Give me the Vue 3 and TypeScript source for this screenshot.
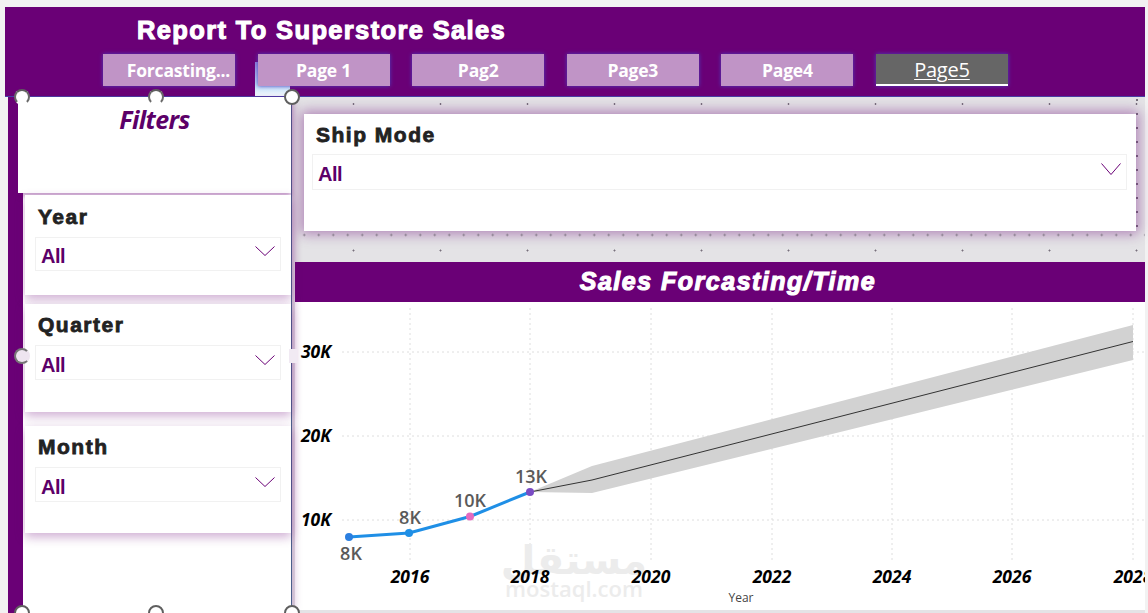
<template>
  <div class="page">
    <header class="header">
      <h1 class="title">Report To Superstore Sales</h1>
      <nav class="tabs">
        <div v-for="t in tabs" :key="t" class="tab" :class="{ active: t === 'Page5' }">{{ t }}</div>
      </nav>
    </header>

    <div class="body">
      <aside class="sidebar">
        <div class="filters">Filters</div>
        <div class="slicers">
          <section v-for="s in sideSlicers" :key="s.name" class="slicer" :class="s.cls">
            <div class="slicer-title">{{ s.name }}</div>
            <div class="dropdown">
              <span class="value">All</span>
              <svg class="chevron" width="20" height="10" viewBox="0 0 20 10">
                <path d="M0.5 0.5 L10 9.5 L19.5 0.5" fill="none" stroke="#6a0076" stroke-width="1" />
              </svg>
            </div>
          </section>
        </div>
      </aside>

      <main class="canvas">
        <div class="top-area">
          <section class="ship-card">
            <div class="slicer-title">Ship Mode</div>
            <div class="dropdown">
              <span class="value">All</span>
              <svg class="chevron" width="20" height="12" viewBox="0 0 20 12">
                <path d="M0.5 0.5 L10 11.5 L19.5 0.5" fill="none" stroke="#6a0076" stroke-width="1" />
              </svg>
            </div>
          </section>
        </div>
        <div class="dot-strip"></div>

        <div class="chart-title">Sales Forcasting/Time</div>
        <div class="chart">
          <svg width="850" height="308" viewBox="295 302 850 308">
            <g stroke="#dedede" stroke-width="1" stroke-dasharray="2 3" fill="none">
              <line v-for="y in gridY" :key="y" x1="342" x2="1145" :y1="y" :y2="y" />
              <line v-for="x in gridX" :key="x" :x1="x" :x2="x" y1="308" y2="560" />
            </g>

            <text x="574" y="574" class="wm-ar" text-anchor="middle">مستقل</text>
            <text x="574" y="597" class="wm-en" text-anchor="middle">mostaql.com</text>

            <polygon points="530,492 592,466 1133,325 1133,360 592,493" fill="#d2d2d2" />
            <polyline points="530,492 592,480 1133,341.5" fill="none" stroke="#333" stroke-width="1" />
            <polyline :points="line" fill="none" stroke="#1f8fe6" stroke-width="3" stroke-linejoin="round" />
            <circle v-for="p in points" :key="p.x" :cx="p.x" :cy="p.y" r="4" :fill="p.c" />

            <text v-for="p in points" :key="'l' + p.x" :x="p.lx" :y="p.ly" class="data-label" text-anchor="middle">{{ p.label }}</text>

            <text v-for="t in yTicks" :key="t.label" x="331" :y="t.y + 6" class="tick" text-anchor="end">{{ t.label }}</text>
            <text v-for="t in xTicks" :key="t.label" :x="t.x" y="583" class="tick" text-anchor="middle">{{ t.label }}</text>
            <text x="741" y="602" class="axis-name" text-anchor="middle">Year</text>
          </svg>
        </div>
      </main>
    </div>

    <span class="tab-glow"></span>
    <span v-for="(h, i) in handles" :key="i" class="handle" :class="h.cls" :style="{ left: h.x + 'px', top: h.y + 'px' }"></span>
  </div>
</template>

<script setup lang="ts">
const tabs = ["Forcasting...", "Page 1", "Pag2", "Page3", "Page4", "Page5"]

const sideSlicers = [
  { name: "Year", cls: "s-year" },
  { name: "Quarter", cls: "s-quarter" },
  { name: "Month", cls: "s-month" },
]

const gridY = [352, 436, 520]
const gridX = [410, 530, 651, 772, 892, 1012, 1133]

const yTicks = [
  { label: "30K", y: 352 },
  { label: "20K", y: 436 },
  { label: "10K", y: 520 },
]

const xTicks = [
  { label: "2016", x: 410 },
  { label: "2018", x: 530 },
  { label: "2020", x: 651 },
  { label: "2022", x: 772 },
  { label: "2024", x: 892 },
  { label: "2026", x: 1012 },
  { label: "2028", x: 1133 },
]

const points = [
  { x: 349, y: 537, c: "#2b7fe0", label: "8K", lx: 351, ly: 560 },
  { x: 409, y: 533, c: "#1f8fe6", label: "8K", lx: 410, ly: 524 },
  { x: 470, y: 516.5, c: "#e46ac0", label: "10K", lx: 470, ly: 507 },
  { x: 530, y: 492, c: "#7a4cc4", label: "13K", lx: 531, ly: 483 },
]

const line = points.map((p) => `${p.x},${p.y}`).join(" ")

const handles = [
  { x: 22, y: 97, cls: "open-bottom" },
  { x: 156, y: 97, cls: "open-bottom" },
  { x: 292, y: 97, cls: "" },
  { x: 22, y: 356, cls: "side" },
  { x: 292, y: 356, cls: "gap" },
  { x: 22, y: 613, cls: "" },
  { x: 156, y: 613, cls: "" },
  { x: 292, y: 613, cls: "" },
]
</script>

<style>
html,
body {
  margin: 0;
  background: #f4f4f4;
}
</style>

<style scoped>
.page {
  position: relative;
  width: 1148px;
  height: 613px;
  overflow: hidden;
  padding-top: 7px;
  box-sizing: border-box;
  background: #f2f2f2;
  font-family: "Liberation Sans", Arial, sans-serif;
}

.header {
  box-sizing: border-box;
  height: 90px;
  margin: 0 3px 0 5px;
  padding-top: 9px;
  background: #6a0076;
  border-bottom: 1px solid #4b3fa6;
}

.title {
  margin: 0 0 0 132px;
  font-size: 25.5px;
  line-height: 29px;
  font-weight: 700;
  color: #fff;
  -webkit-text-stroke: 1.1px #fff;
  letter-spacing: 1.35px;
  white-space: nowrap;
}

.tabs {
  position: relative;
  z-index: 1;
  display: flex;
  gap: 22.6px;
  margin: 9px 0 0 98px;
}

.tab {
  width: 132px;
  height: 32px;
  line-height: 33px;
  text-align: center;
  background: #c094c6;
  color: #fff;
  font-family: "Open Sans", sans-serif;
  font-size: 17.5px;
  font-weight: 700;
  letter-spacing: -0.2px;
  box-shadow: 0 0 4px #4b3fc0;
}

.tab:first-child {
  padding-left: 19px;
  box-sizing: border-box;
  white-space: nowrap;
}

.tab.active {
  box-sizing: border-box;
  background: #666;
  border-bottom: 2px solid #fff;
  font-weight: 400;
  font-size: 20px;
  line-height: 32px;
  text-decoration: underline;
  text-underline-offset: 2px;
  text-decoration-thickness: 1px;
}

.tab-glow {
  position: absolute;
  left: 255px;
  top: 62px;
  width: 35px;
  height: 34px;
  background: linear-gradient(#8f7fd8 0%, #bcdcf6 68%, #f6fbff 100%);
}

.body {
  display: flex;
  height: 516px;
  margin-right: 3px;
  padding-left: 8px;
}

.sidebar {
  position: relative;
  z-index: 1;
  box-sizing: border-box;
  width: 284px;
  flex: none;
  background: #fff;
  border-left: 15px solid #6a0076;
  border-right: 1.5px solid #4c5f8c;
  box-shadow: 5px 0 8px -3px rgba(106, 0, 118, 0.28);
}

.filters {
  box-sizing: border-box;
  height: 96px;
  margin-left: -5px;
  padding-top: 5px;
  text-align: center;
  background: #fff;
  color: #5c0068;
  font-family: "Open Sans", sans-serif;
  font-size: 25px;
  font-weight: 700;
  font-style: italic;
  letter-spacing: -0.6px;
  box-shadow: 0 3px 5px rgba(106, 0, 118, 0.4);
}

.slicers {
  display: flex;
  flex-direction: column;
  margin: 2px 0 0 2px;
}

.slicer {
  box-sizing: border-box;
  padding: 9px 10px 0;
  background: #fff;
  box-shadow: 0 4px 10px rgba(106, 0, 118, 0.32);
}

.s-year {
  height: 100px;
  margin-bottom: 9px;
}

.s-quarter {
  height: 108px;
  margin-bottom: 14px;
  padding-top: 8px;
}

.s-month {
  height: 107px;
  padding-top: 8px;
}

.slicer-title {
  padding-left: 3px;
  height: 33px;
  font-size: 21px;
  line-height: 26px;
  font-weight: 700;
  color: #222;
  -webkit-text-stroke: 0.8px #222;
  letter-spacing: 1.5px;
}

.dropdown {
  display: flex;
  align-items: center;
  justify-content: space-between;
  box-sizing: border-box;
  height: 35px;
  padding: 5px 5px 0 5px;
  border: 1px solid #f1f1f1;
  background: #fff;
}

.s-year .dropdown {
  height: 34px;
}

.value {
  font-size: 20px;
  font-weight: 700;
  color: #5c0068;
  letter-spacing: -0.5px;
}

.chevron {
  margin-top: -11px;
}

.canvas {
  flex: 1;
  min-width: 0;
  background: #e4e3e6;
}

.top-area {
  box-sizing: border-box;
  height: 135px;
  padding: 17px 9px 0 12px;
  background-color: #e4e3e6;
  background-image:
    radial-gradient(circle, #77707c 0.8px, transparent 1.2px),
    radial-gradient(circle, #77707c 0.8px, transparent 1.2px);
  background-size: 87px 146px, 14px 14px;
  background-position: 18px -66px, 838px 10px;
  background-repeat: repeat, repeat-y;
}

.ship-card {
  box-sizing: border-box;
  height: 117px;
  padding: 8px 9px 0 8px;
  background: #fff;
  box-shadow: 0 0 12px 3px rgba(106, 0, 118, 0.42);
}

.ship-card .slicer-title {
  padding-left: 4px;
  height: 32px;
}

.ship-card .dropdown {
  height: 36px;
}

.dot-strip {
  height: 30px;
  background-image:
    radial-gradient(circle, #77707c 0.8px, transparent 1.2px),
    radial-gradient(circle, #77707c 0.8px, transparent 1.2px);
  background-size: 14.5px 31px, 87px 31px;
  background-position: 5px -12.5px, 18px 2.5px;
  background-repeat: repeat-x;
}

.chart-title {
  box-sizing: border-box;
  margin-left: 3px;
  padding-left: 16px;
  height: 40px;
  line-height: 39px;
  text-align: center;
  background: #6a0076;
  color: #fff;
  font-size: 25px;
  font-weight: 700;
  font-style: italic;
  -webkit-text-stroke: 1.1px #fff;
  letter-spacing: 1.5px;
  white-space: nowrap;
}

.chart {
  height: 308px;
  margin-left: 3px;
  background: #fff;
}

.chart svg {
  display: block;
}

.tick {
  font-family: "Open Sans", sans-serif;
  font-size: 17.5px;
  font-weight: 700;
  font-style: italic;
  fill: #000;
}

.data-label {
  font-family: "Open Sans", sans-serif;
  font-size: 18px;
  font-weight: 600;
  fill: #5a5a5a;
}

.axis-name {
  font-family: "Open Sans", sans-serif;
  font-size: 12px;
  fill: #444;
}

.wm-ar {
  font-family: "DejaVu Sans", sans-serif;
  font-size: 40px;
  font-weight: 700;
  fill: #ececec;
}

.wm-en {
  font-family: "Open Sans", sans-serif;
  font-size: 22px;
  font-weight: 600;
  fill: #ececec;
}

.handle {
  position: absolute;
  z-index: 2;
  box-sizing: border-box;
  width: 16px;
  height: 16px;
  margin: -8px 0 0 -8px;
  border-radius: 50%;
  background: #fff;
  border: 2px solid #5f5f5f;
}

.handle.open-bottom {
  border-bottom-color: transparent;
  border-left-color: #6a6a6a;
  border-right-color: #6a6a6a;
}

.handle.side {
  background: #eee5f0;
  border-color: #777 transparent #777 #777;
}

.handle.gap {
  width: 8px;
  height: 14px;
  margin: -7px 0 0 -3px;
  border: none;
  border-radius: 0;
  background: #f1eaf3;
}
</style>
